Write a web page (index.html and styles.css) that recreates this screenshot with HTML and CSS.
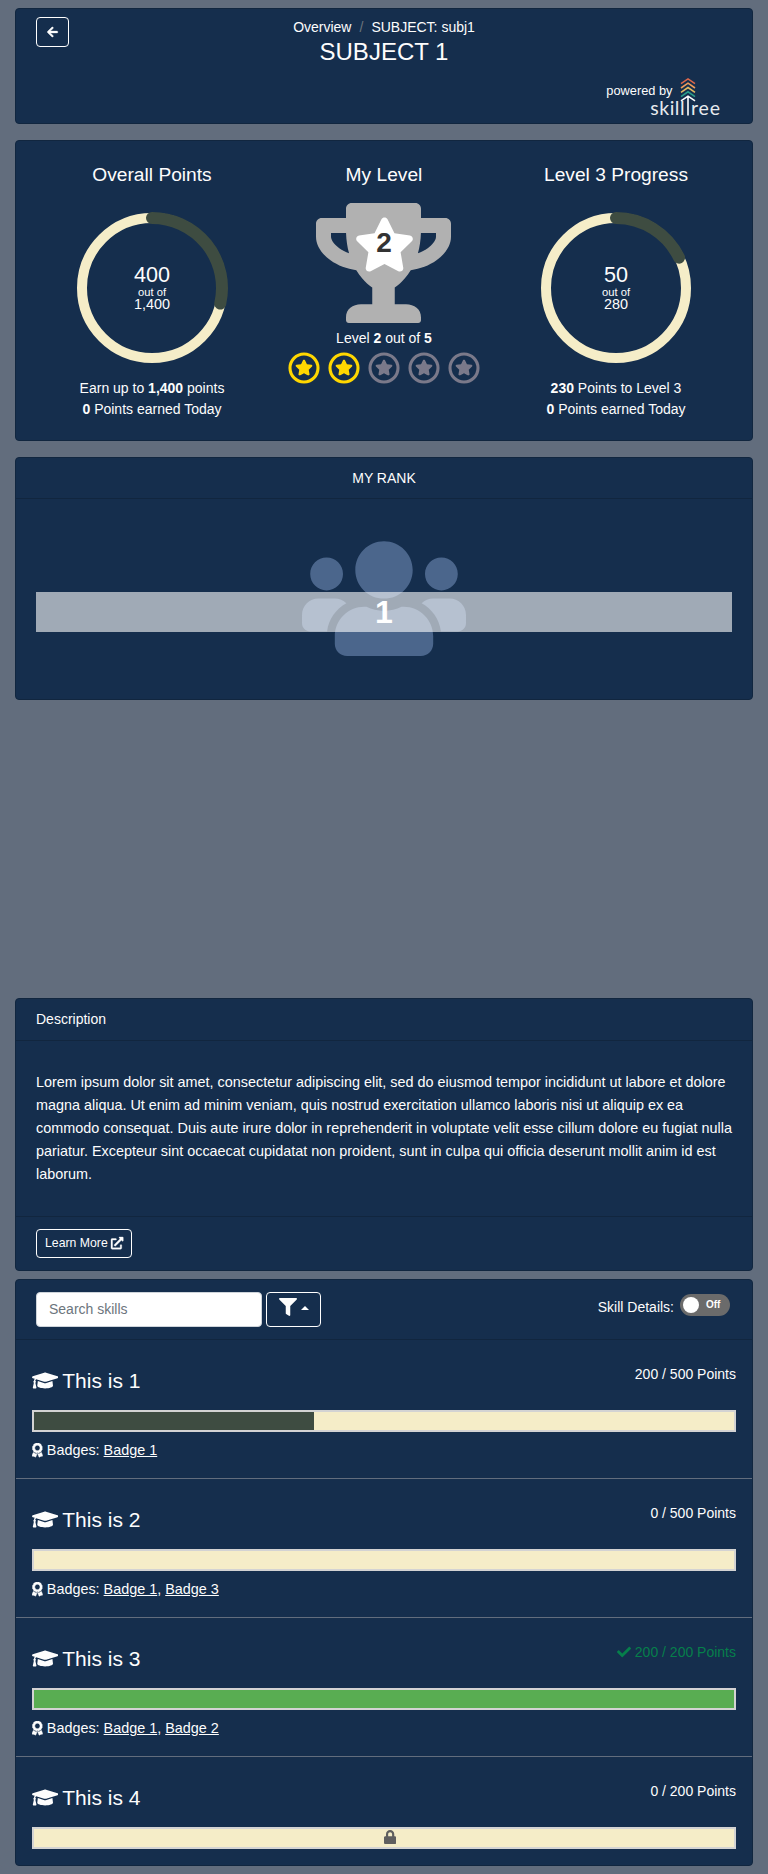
FILE: index.html
```html
<!DOCTYPE html>
<html lang="en">
<head>
<meta charset="utf-8">
<title>SUBJECT 1</title>
<link rel="stylesheet" href="styles.css">
</head>
<body>
<svg class="defs" width="0" height="0" aria-hidden="true">
  <defs>
    <symbol id="star" viewBox="0 0 576 512"><path d="M259.3 17.8L194 150.2 47.9 171.5c-26.2 3.8-36.7 36.1-17.7 54.6l105.7 103-25 145.5c-4.5 26.3 23.2 46 46.4 33.7L288 439.6l130.7 68.7c23.2 12.2 50.9-7.4 46.4-33.7l-25-145.5 105.7-103c19-18.5 8.5-50.8-17.7-54.6L382 150.2 316.7 17.8c-11.7-23.6-45.6-23.9-57.4 0z"/></symbol>
    <symbol id="ringstar" viewBox="0 0 32 32"><circle cx="16" cy="16" r="14" fill="none" stroke="currentColor" stroke-width="3.1"/><use href="#star" x="7" y="7.2" width="18" height="16.6"/></symbol>
    <symbol id="cap" viewBox="0 0 640 512"><path d="M622.34 153.2L343.4 67.5c-15.2-4.67-31.6-4.67-46.79 0L17.66 153.2c-23.54 7.23-23.54 38.36 0 45.59l48.63 14.94c-10.67 13.19-17.23 29.28-17.88 46.9C38.78 266.15 32 276.11 32 288c0 10.78 5.68 19.85 13.86 25.65L20.33 428.53C18.11 438.52 25.71 448 35.94 448h56.11c10.24 0 17.84-9.48 15.62-19.47L82.14 313.65C90.32 307.85 96 298.78 96 288c0-11.57-6.47-21.25-15.66-26.87.76-15.02 8.44-28.3 20.69-36.72L296.6 284.5c9.06 2.78 26.44 6.25 46.79 0l278.95-85.7c23.55-7.24 23.55-38.36 0-45.6zM352.79 315.09c-28.53 8.76-52.84 3.92-65.59 0l-145.02-44.55L128 384c0 35.35 85.96 64 192 64s192-28.65 192-64l-14.18-113.47-145.03 44.56z"/></symbol>
    <symbol id="award" viewBox="0 0 384 512"><path stroke="currentColor" stroke-width="18" d="M97.12 362.63c-8.69-8.69-4.16-6.24-25.12-11.85-9.51-2.55-17.87-7.45-25.43-13.32L1.2 448.7c-4.39 10.77 3.81 22.47 15.43 22.03l52.69-2.01L105.56 507c8 8.44 22.04 5.81 26.43-4.96l52.05-127.62c-10.84 6.04-22.87 9.58-35.31 9.58-19.5 0-37.82-7.59-51.61-21.37zM382.8 448.7l-45.37-111.24c-7.56 5.88-15.92 10.77-25.43 13.32-21.07 5.64-16.45 3.18-25.12 11.85-13.79 13.78-32.12 21.37-51.62 21.37-12.44 0-24.47-3.55-35.31-9.58L252 502.04c4.39 10.77 18.44 13.4 26.43 4.96l36.25-38.28 52.69 2.01c11.62.44 19.82-11.27 15.43-22.03zM263 340c15.28-15.55 17.03-14.21 38.79-20.14 13.89-3.79 24.75-14.84 28.47-28.98 7.48-28.4 5.54-24.97 25.95-45.75 10.17-10.35 14.14-25.44 10.42-39.58-7.47-28.38-7.48-24.42 0-52.83 3.72-14.14-.25-29.23-10.42-39.58-20.41-20.78-18.47-17.36-25.95-45.75-3.72-14.14-14.58-25.19-28.47-28.98-27.88-7.61-24.52-5.62-44.95-26.41-10.17-10.35-25-14.4-38.89-10.61-27.87 7.6-23.98 7.61-51.9 0-13.89-3.79-28.72.25-38.89 10.61-20.41 20.78-17.05 18.8-44.94 26.41-13.89 3.79-24.75 14.84-28.47 28.98-7.47 28.39-5.54 24.97-25.95 45.75-10.17 10.35-14.15 25.44-10.42 39.58 7.47 28.36 7.48 24.4 0 52.82-3.72 14.14.25 29.23 10.42 39.59 20.41 20.78 18.47 17.35 25.95 45.75 3.72 14.14 14.58 25.19 28.47 28.98C104.6 325.96 106.27 325 121 340c13.23 13.47 33.84 15.88 49.74 5.82a39.676 39.676 0 0 1 42.53 0c15.89 10.06 36.5 7.65 49.73-5.82zM97.66 175.96c0-53.03 42.24-96.02 94.34-96.02s94.34 42.99 94.34 96.02-42.24 96.02-94.34 96.02-94.34-42.99-94.34-96.02z"/></symbol>
  </defs>
</svg>

<header class="card top">
  <a class="btn back" aria-label="Back"><svg width="11" height="12" viewBox="0 0 448 512"><path stroke="currentColor" stroke-width="14" d="M257.5 445.1l-22.2 22.2c-9.4 9.4-24.6 9.4-33.9 0L7 273c-9.4-9.4-9.4-24.6 0-33.9L201.4 44.7c9.4-9.4 24.6-9.4 33.9 0l22.2 22.2c9.5 9.5 9.3 25-.4 34.3L136.6 216H424c13.3 0 24 10.7 24 24v32c0 13.3-10.7 24-24 24H136.6l120.5 114.8c9.8 9.3 10 24.8.4 34.3z"/></svg></a>
  <div class="heading">
    <nav class="crumbs"><span>Overview</span><span class="slash">/</span><span>SUBJECT: subj1</span></nav>
    <h1>SUBJECT 1</h1>
  </div>
  <div class="powered">
    <svg class="logo" width="124" height="48" viewBox="-37 0 124 48">
      <text x="-30.7" y="20.3" class="by">powered by</text>
      <g fill="none" stroke-width="1.6">
        <path stroke="#d9674c" d="M44 8.7l7-4.8 7 4.8"/>
        <path stroke="#ee9b5b" d="M44 13l7-4.8 7 4.8"/>
        <path stroke="#e3b962" d="M44 17.3l7-4.8 7 4.8"/>
        <path stroke="#2a9d8a" d="M44 21.6l7-4.8 7 4.8"/>
        <path stroke="#fff" d="M44 25.9l7-4.8 7 4.8M51 21.4v19"/>
      </g>
      <text x="13.2" y="40.4" textLength="34.4" class="word">skill</text>
      <text x="54" y="40.4" textLength="29" class="word">ree</text>
    </svg>
  </div>
</header>

<section class="card stats">
  <div class="stat">
    <h2>Overall Points</h2>
    <div class="dial">
      <svg width="154" height="154" viewBox="-77 -77 154 154"><circle class="track" r="70"/><path class="arc" d="M0-70A70 70 0 0 1 68.24 15.58"/></svg>
      <div class="dial-text"><b>400</b><small>out of</small><span>1,400</span></div>
    </div>
    <p>Earn up to <strong>1,400</strong> points</p>
    <p><strong>0</strong> Points earned Today</p>
  </div>
  <div class="stat">
    <h2>My Level</h2>
    <div class="trophy">
      <svg width="136" height="120" viewBox="0 0 576 512" preserveAspectRatio="xMinYMid"><path fill="#b1b1b1" d="M552 64H448V24c0-13.3-10.7-24-24-24H152c-13.3 0-24 10.7-24 24v40H24C10.7 64 0 74.7 0 88v56c0 35.7 22.5 72.4 61.9 100.7 31.5 22.7 69.8 37.1 110 41.7C203.3 338.5 240 360 240 360v72h-48c-35.3 0-64 20.7-64 56v12c0 6.6 5.4 12 12 12h296c6.6 0 12-5.4 12-12v-12c0-35.3-28.7-56-64-56h-48v-72s36.7-21.5 68.1-73.6c40.3-4.6 78.6-19 110-41.7 39.3-28.3 61.9-65 61.9-100.7V88c0-13.3-10.7-24-24-24zM99.3 192.8C74.9 175.2 64 155.6 64 144v-16h64.2c1 32.6 5.8 61.2 12.8 86.2-15.1-5.2-29.2-12.4-41.7-21.4zM512 144c0 16.1-17.7 36.1-35.3 48.8-12.5 9-26.7 16.2-41.8 21.4 7-25 11.8-53.6 12.8-86.2H512v16z"/></svg>
      <div class="level-star"><svg width="61" height="55"><use href="#star"/></svg><span class="level-num">2</span></div>
    </div>
    <p class="level">Level <strong>2</strong> out of <strong>5</strong></p>
    <div class="stars">
      <svg class="on"><use href="#ringstar"/></svg><svg class="on"><use href="#ringstar"/></svg><svg><use href="#ringstar"/></svg><svg><use href="#ringstar"/></svg><svg><use href="#ringstar"/></svg>
    </div>
  </div>
  <div class="stat">
    <h2>Level 3 Progress</h2>
    <div class="dial">
      <svg width="154" height="154" viewBox="-77 -77 154 154"><circle class="track" r="70"/><path class="arc" d="M0-70A70 70 0 0 1 63.07-30.37"/></svg>
      <div class="dial-text"><b>50</b><small>out of</small><span>280</span></div>
    </div>
    <p><strong>230</strong> Points to Level 3</p>
    <p><strong>0</strong> Points earned Today</p>
  </div>
</section>

<section class="card rank">
  <div class="card-head center">MY RANK</div>
  <div class="rank-body">
    <svg width="164" height="131.2" viewBox="0 0 640 512"><path fill="#4b668c" d="M96 224c35.3 0 64-28.7 64-64s-28.7-64-64-64-64 28.7-64 64 28.7 64 64 64zm448 0c35.3 0 64-28.7 64-64s-28.7-64-64-64-64 28.7-64 64 28.7 64 64 64zm32 32h-64c-17.6 0-33.5 7.1-45.1 18.6 40.3 22.1 68.9 62 75.1 109.4h66c17.7 0 32-14.3 32-32v-32c0-35.3-28.7-64-64-64zm-256 0c61.9 0 112-50.1 112-112S381.9 32 320 32 208 82.1 208 144s50.1 112 112 112zm76.8 32h-8.3c-20.8 10-43.9 16-68.5 16s-47.6-6-68.5-16h-8.3C179.6 288 128 339.6 128 403.2V432c0 26.5 21.5 48 48 48h288c26.5 0 48-21.5 48-48v-28.8c0-63.6-51.6-115.2-115.2-115.2zm-223.7-13.4C161.5 263.1 145.6 256 128 256H64c-35.3 0-64 28.7-64 64v32c0 17.7 14.3 32 32 32h65.9c6.3-47.4 34.9-87.3 75.2-109.4z"/></svg>
    <div class="rank-band">1</div>
  </div>
</section>

<section class="card about">
  <div class="card-head">Description</div>
  <p class="lorem">Lorem ipsum dolor sit amet, consectetur adipiscing elit, sed do eiusmod tempor incididunt ut labore et dolore magna aliqua. Ut enim ad minim veniam, quis nostrud exercitation ullamco laboris nisi ut aliquip ex ea commodo consequat. Duis aute irure dolor in reprehenderit in voluptate velit esse cillum dolore eu fugiat nulla pariatur. Excepteur sint occaecat cupidatat non proident, sunt in culpa qui officia deserunt mollit anim id est laborum.</p>
  <div class="card-foot"><a class="btn learn">Learn More <svg width="12.25" height="12.25" viewBox="0 0 512 512"><path stroke="currentColor" stroke-width="14" d="M432 320H400a16 16 0 0 0-16 16V448H64V128H208a16 16 0 0 0 16-16V80a16 16 0 0 0-16-16H48A48 48 0 0 0 0 112V464a48 48 0 0 0 48 48H400a48 48 0 0 0 48-48V336A16 16 0 0 0 432 320ZM488 0h-128c-21.37 0-32.05 25.91-17 41l35.73 35.73L135 320.37a24 24 0 0 0 0 34L157.67 377a24 24 0 0 0 34 0L435.28 133.32 471 169c15 15 41 4.5 41-17V24A24 24 0 0 0 488 0Z"/></svg></a></div>
</section>

<section class="card skills">
  <div class="toolbar">
    <input class="search" type="text" placeholder="Search skills">
    <a class="btn filter" aria-label="Filter"><svg width="18" height="18" viewBox="0 0 512 512"><path d="M487.976 0H24.028C2.71 0-8.047 25.866 7.058 40.971L192 225.941V432c0 7.831 3.821 15.17 10.237 19.662l80 55.98C298.02 518.69 320 507.493 320 487.98V225.941l184.947-184.97C520.021 25.896 509.338 0 487.976 0z"/></svg><i class="caret"></i></a>
    <div class="details"><span>Skill Details:</span><span class="toggle"><i class="knob"></i>Off</span></div>
  </div>

  <article class="skill">
    <div class="skill-head"><h3><svg><use href="#cap"/></svg>This is 1</h3><span class="points">200 / 500 Points</span></div>
    <div class="bar"><div class="fill" style="width:40%"></div></div>
    <div class="badges"><svg><use href="#award"/></svg>Badges: <a>Badge 1</a></div>
  </article>
  <article class="skill">
    <div class="skill-head"><h3><svg><use href="#cap"/></svg>This is 2</h3><span class="points">0 / 500 Points</span></div>
    <div class="bar"></div>
    <div class="badges"><svg><use href="#award"/></svg>Badges: <a>Badge 1</a>, <a>Badge 3</a></div>
  </article>
  <article class="skill">
    <div class="skill-head"><h3><svg><use href="#cap"/></svg>This is 3</h3><span class="points done"><svg width="14" height="14" viewBox="0 0 512 512"><path d="M173.898 439.404l-166.4-166.4c-9.997-9.997-9.997-26.206 0-36.204l36.203-36.204c9.997-9.998 26.207-9.998 36.204 0L192 312.69 432.095 72.596c9.997-9.997 26.207-9.997 36.204 0l36.203 36.204c9.997 9.997 9.997 26.206 0 36.204l-294.4 294.401c-9.998 9.997-26.207 9.997-36.204-.001z"/></svg> 200 / 200 Points</span></div>
    <div class="bar"><div class="fill complete" style="width:100%"></div></div>
    <div class="badges"><svg><use href="#award"/></svg>Badges: <a>Badge 1</a>, <a>Badge 2</a></div>
  </article>
  <article class="skill">
    <div class="skill-head"><h3><svg><use href="#cap"/></svg>This is 4</h3><span class="points">0 / 200 Points</span></div>
    <div class="bar locked"><svg width="12.25" height="14" viewBox="0 0 448 512"><path d="M400 224h-24v-72C376 68.2 307.8 0 224 0S72 68.2 72 152v72H48c-26.5 0-48 21.5-48 48v192c0 26.5 21.5 48 48 48h352c26.5 0 48-21.5 48-48V272c0-26.5-21.5-48-48-48zm-104 0H152v-72c0-39.7 32.3-72 72-72s72 32.3 72 72v72z"/></svg></div>
  </article>
</section>
</body>
</html>
```
FILE: styles.css
```css
* { box-sizing: border-box; }
body {
  margin: 0;
  padding: 8px 15px;
  background: #626d7d;
  color: #fdfdfd;
  font: 14px/21px "Liberation Sans", Arial, sans-serif;
}
svg { fill: currentColor; flex: none; }
.defs { position: absolute; }
h1, h2, h3, p { margin: 0; font-weight: 400; }
.card {
  background: #152e4d;
  border: 1px solid #11263f;
  border-radius: 4px;
}
.btn {
  display: inline-flex;
  align-items: center;
  justify-content: center;
  border: 1px solid #fff;
  border-radius: 4px;
}

.top {
  height: 116px;
  padding: 8px 20px 0;
  display: grid;
  grid-template-columns: 33px 1fr 33px;
  grid-template-rows: 54px 52px;
}
.back { width: 33px; height: 30px; }
.back svg, .learn svg, .badges svg { overflow: visible; }
.heading { text-align: center; }
.crumbs { display: flex; justify-content: center; gap: 8px; }
.slash { color: #6c757d; }
h1 { font-size: 24px; line-height: 28px; }
.powered {
  grid-column: 1 / -1;
  display: flex;
  justify-content: flex-end;
  padding-right: 8px;
}
.logo { margin-top: 4px; }
.by { font-size: 12.8px; }
.word { font: 400 19.5px Lato, sans-serif; fill: #e6eaee; }

.stats {
  margin-top: 16px;
  height: 301px;
  display: grid;
  grid-template-columns: repeat(3, 232px);
  justify-content: center;
  text-align: center;
  padding-top: 22px;
}
.stat { display: flex; flex-direction: column; align-items: center; }
h2 { font-size: 19.2px; line-height: 23px; margin-bottom: 25px; }
.dial { display: grid; height: 154px; margin-bottom: 13px; }
.dial > * { grid-area: 1 / 1; }
.track { fill: none; stroke: #f5edc8; stroke-width: 10; }
.arc { fill: none; stroke: #3e4c41; stroke-width: 12; stroke-linecap: round; }
.dial-text { display: flex; flex-direction: column; align-items: center; padding-top: 51px; }
.dial-text b { font-size: 21.6px; font-weight: 400; line-height: 25px; }
.dial-text small { font-size: 11.2px; line-height: 10px; }
.dial-text span { font-size: 14.4px; line-height: 14px; }
.trophy { display: grid; justify-items: center; margin-top: -8px; height: 120px; }
.trophy > * { grid-area: 1 / 1; }
.level-star { display: grid; justify-items: center; height: 55px; margin-top: 14px; color: #fff; }
.level-star > * { grid-area: 1 / 1; }
.level-num { font-size: 28px; font-weight: 700; line-height: 52px; color: #333; }
.level { padding-top: 5px; }
.stars { display: flex; gap: 8px; margin-top: 3px; margin-right: 1px; color: #7a798a; }
.stars svg { width: 32px; height: 32px; }
.stars .on { color: #ffd700; }

.rank { margin-top: 16px; height: 243px; }
.card-head { height: 42px; padding: 10px 20px; border-bottom: 1px solid #11263f; }
.center { text-align: center; height: 41px; }
.rank-body { display: grid; justify-items: center; padding: 34px 20px 0; }
.rank-body > * { grid-area: 1 / 1; }
.rank-band {
  width: 100%;
  height: 40px;
  margin-top: 59px;
  background: rgba(253, 253, 253, .6);
  color: #fff;
  font-size: 32px;
  font-weight: 700;
  line-height: 40px;
  text-align: center;
}

.about { margin-top: 298px; height: 273px; }
.lorem { height: 175px; padding: 30px 20px 0; font-size: 14.4px; line-height: 23.04px; }
.card-foot { border-top: 1px solid #11263f; padding: 12px 20px; }
.learn { width: 96px; height: 29px; gap: 3px; font-size: 12.25px; }

.skills { margin-top: 8px; height: 587px; }
.toolbar {
  display: flex;
  align-items: flex-start;
  height: 60px;
  padding: 12px 22px 0 20px;
  border-bottom: 1px solid #11263f;
}
.search {
  width: 226px;
  height: 35px;
  padding: 0 12px 2px;
  border: 1px solid #ced4da;
  border-radius: 4px;
  background: #fff;
  font: inherit;
}
.search::placeholder { color: #6c757d; opacity: 1; }
.filter { width: 55px; height: 35px; margin-left: 4px; gap: 4px; padding-bottom: 5px; }
.caret { border: 4px solid transparent; border-top: 0; border-bottom-color: #fff; margin-top: 2px; }
.details { margin-left: auto; display: flex; gap: 6px; padding-top: 2px; }
.details > span:first-child { padding-top: 3px; }
.toggle {
  display: flex;
  align-items: center;
  gap: 7px;
  width: 50px;
  height: 22px;
  padding: 0 3px 1px;
  border-radius: 11px;
  background: #6b6b6b;
  color: #fff;
  font-size: 10px;
  font-weight: 600;
}
.knob { width: 16px; height: 16px; border-radius: 50%; background: #fff; }

.skill { height: 139px; padding: 23px 16px 0; border-bottom: 1px solid #626d7d; }
.skill:last-child { height: 109px; border: 0; }
.skill-head { display: flex; justify-content: space-between; height: 47px; }
h3 { display: flex; gap: 4px; font-size: 21px; line-height: 36px; }
h3 svg { width: 26.25px; height: 21px; margin-top: 7px; }
.points { padding-top: 1px; }
.done { color: #067f4b; display: flex; gap: 4px; }
.done svg { margin-top: 3px; }
.bar { height: 22px; border: 2px solid #d3d3d3; background: #f5edc8; }
.fill { height: 18px; background: #3e4c41; }
.complete { background: #59ad52; }
.locked { display: flex; justify-content: center; padding: 1px 0 0 12px; color: #5f5f5f; }
.badges { margin-top: 8px; font-size: 14.4px; line-height: 21px; }
.badges svg { width: 10.8px; height: 14.4px; margin-right: 4px; vertical-align: -2px; }
.badges a { text-decoration: underline; }
```
